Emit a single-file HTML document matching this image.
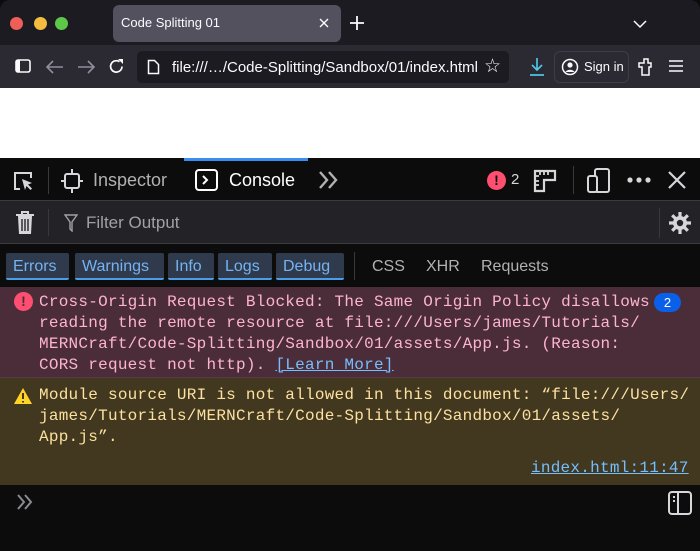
<!DOCTYPE html>
<html><head><meta charset="utf-8"><style>
*{margin:0;padding:0;box-sizing:border-box}
body{width:700px;height:551px;overflow:hidden;background:#0c0c0d;font-family:"Liberation Sans",sans-serif;position:relative}
.a{position:absolute}
.mono{font-family:"Liberation Mono",monospace;font-size:16px;letter-spacing:0.25px;line-height:21px}
.fb{position:absolute;top:253px;height:27px;background:#2f3a4d;color:#75b3f2;font-size:16px;line-height:28px;padding:0 7px;border-bottom:2px solid #4a9de8;border-radius:2px}
</style></head><body>
<div class="a" style="left:0;top:0;width:700px;height:45px;background:#1c1b22;border-radius:10px 10px 0 0"></div>
<div class="a" style="left:10px;top:17px;width:13px;height:13px;border-radius:7px;background:#ed5f57"></div>
<div class="a" style="left:34px;top:17px;width:13px;height:13px;border-radius:7px;background:#f4bd3f"></div>
<div class="a" style="left:55px;top:17px;width:13px;height:13px;border-radius:7px;background:#5dc74a"></div>
<div class="a" style="left:113px;top:5px;width:228px;height:37px;background:#52515d;border-radius:6px"></div>
<div class="a" style="left:121px;top:15px;color:#fbfbfe;font-size:13px">Code Splitting 01</div>
<svg class="a" style="left:319px;top:18px" width="10" height="10"><path d="M1 1l8 8M9 1L1 9" stroke="#fbfbfe" stroke-width="1.4"/></svg>
<svg class="a" style="left:350px;top:16px" width="14" height="14"><path d="M7 0v14M0 7h14" stroke="#fbfbfe" stroke-width="1.8"/></svg>
<svg class="a" style="left:633px;top:19px" width="14" height="10"><path d="M1 2l6 6 6-6" stroke="#fbfbfe" stroke-width="1.5" fill="none"/></svg>
<div class="a" style="left:0;top:45px;width:700px;height:43px;background:#2b2a33"></div>
<svg class="a" style="left:15px;top:59px" width="16" height="14"><rect x="1" y="1" width="14" height="12" rx="2" stroke="#fbfbfe" stroke-width="1.6" fill="none"/><rect x="1" y="1" width="4" height="12" fill="#fbfbfe"/></svg>
<svg class="a" style="left:46px;top:60px" width="18" height="14"><path d="M17 7H2M7 1L1 7l6 6" stroke="#8f8f9d" stroke-width="1.6" fill="none"/></svg>
<svg class="a" style="left:77px;top:60px" width="18" height="14"><path d="M1 7h15M11 1l6 6-6 6" stroke="#8f8f9d" stroke-width="1.6" fill="none"/></svg>
<svg class="a" style="left:108px;top:58px" width="17" height="17"><path d="M14 8.5A5.7 5.7 0 1 1 11.5 3.7" stroke="#fbfbfe" stroke-width="1.7" fill="none"/><path d="M10 1h5v5z" fill="#fbfbfe"/></svg>
<div class="a" style="left:137px;top:51px;width:372px;height:32px;background:#1c1b22;border-radius:5px"></div>
<svg class="a" style="left:147px;top:59px" width="13" height="16"><path d="M1.5 1.5h6l4 4v9h-10z" stroke="#fbfbfe" stroke-width="1.5" fill="none"/></svg>
<div class="a" style="left:172px;top:59px;color:#fbfbfe;font-size:15px">file:///…/Code-Splitting/Sandbox/01/index.html</div>
<div class="a" style="left:484px;top:55px;color:#fbfbfe;font-size:19px">☆</div>
<svg class="a" style="left:528px;top:57px" width="18" height="20"><path d="M9 1v12M4 8l5 5 5-5M2 18h14" stroke="#4fc3e6" stroke-width="1.7" fill="none"/></svg>
<div class="a" style="left:554px;top:51px;width:75px;height:32px;border:1px solid #3e3d47;border-radius:6px"></div>
<svg class="a" style="left:561px;top:58px" width="18" height="18"><circle cx="9" cy="9" r="7.5" stroke="#fbfbfe" stroke-width="1.5" fill="none"/><circle cx="9" cy="7" r="2.6" fill="#fbfbfe"/><path d="M4.5 14a5 4 0 0 1 9 0" fill="#fbfbfe"/></svg>
<div class="a" style="left:584px;top:59px;color:#fbfbfe;font-size:13px">Sign in</div>
<svg class="a" style="left:637px;top:57px" width="18" height="20"><path d="M5 18V10H2V6h5V2h4v4h3v4h-2v8z" stroke="#fbfbfe" stroke-width="1.5" fill="none"/></svg>
<svg class="a" style="left:668px;top:59px" width="16" height="14"><path d="M1 2h14M1 7h14M1 12h14" stroke="#fbfbfe" stroke-width="1.6"/></svg>
<div class="a" style="left:0;top:88px;width:700px;height:70px;background:#fff"></div>
<div class="a" style="left:0;top:158px;width:700px;height:43px;background:#0c0c0d;border-bottom:1px solid #3a3a3f"></div>
<div class="a" style="left:184px;top:158px;width:124px;height:3px;background:#3a8eed"></div>
<svg class="a" style="left:12px;top:170px" width="24" height="22"><path d="M8 19H3V3h16v5" stroke="#d7d7db" stroke-width="2" fill="none"/><path d="M10 9l10 4-4 1.5 4 4-1.5 1.5-4-4L13 20z" fill="#d7d7db"/></svg>
<div class="a" style="left:48px;top:167px;width:1px;height:27px;background:#38383d"></div>
<svg class="a" style="left:61px;top:169px" width="22" height="24"><rect x="4" y="5" width="14" height="14" rx="2" stroke="#d7d7db" stroke-width="2" fill="none"/><path d="M11 0v5M11 19v5M0 12h4M18 12h4" stroke="#d7d7db" stroke-width="2"/></svg>
<div class="a" style="left:93px;top:170px;color:#b1b1b3;font-size:18px">Inspector</div>
<svg class="a" style="left:195px;top:169px" width="24" height="22"><rect x="1" y="1" width="21" height="20" rx="3" stroke="#fff" stroke-width="2" fill="none"/><path d="M8 7l4 4-4 4" stroke="#fff" stroke-width="2" fill="none"/></svg>
<div class="a" style="left:229px;top:170px;color:#fff;font-size:18px">Console</div>
<svg class="a" style="left:318px;top:170px" width="22" height="20"><path d="M2 2l7 8-7 8M11 2l7 8-7 8" stroke="#b1b1b3" stroke-width="2.4" fill="none"/></svg>
<div class="a" style="left:487px;top:171px;width:19px;height:19px;border-radius:10px;background:#ff4f70;color:#0c0c0d;font-size:14px;font-weight:bold;text-align:center;line-height:19px">!</div>
<div class="a" style="left:511px;top:171px;color:#d7d7db;font-size:15px">2</div>
<svg class="a" style="left:533px;top:169px" width="24" height="24"><path d="M2 2h20v9H11v11H2z" stroke="#d7d7db" stroke-width="2.2" fill="none"/><path d="M7 2v4M11 2v4M15 2v4M2 7h4M2 12h4M2 16h4" stroke="#d7d7db" stroke-width="1.8"/></svg>
<div class="a" style="left:573px;top:166px;width:1px;height:28px;background:#38383d"></div>
<svg class="a" style="left:587px;top:168px" width="24" height="26"><rect x="8" y="1" width="14" height="23" rx="2" stroke="#d7d7db" stroke-width="2" fill="none"/><rect x="1" y="8" width="9" height="16" rx="2" stroke="#d7d7db" stroke-width="2" fill="#0c0c0d"/></svg>
<svg class="a" style="left:627px;top:177px" width="24" height="6"><circle cx="3" cy="3" r="2.6" fill="#d7d7db"/><circle cx="12" cy="3" r="2.6" fill="#d7d7db"/><circle cx="21" cy="3" r="2.6" fill="#d7d7db"/></svg>
<svg class="a" style="left:668px;top:171px" width="18" height="18"><path d="M1 1l16 16M17 1L1 17" stroke="#d7d7db" stroke-width="2.2"/></svg>
<div class="a" style="left:0;top:201px;width:700px;height:43px;background:#232327;border-bottom:1px solid #3a3a3f"></div>
<svg class="a" style="left:14px;top:210px" width="22" height="26"><path d="M2 5h18M8 5V2h6v3" stroke="#d7d7db" stroke-width="2" fill="none"/><path d="M4 6h14l-1 18H5z" fill="#d7d7db"/><path d="M8 9v12M11 9v12M14 9v12" stroke="#232327" stroke-width="1.4"/></svg>
<div class="a" style="left:48px;top:209px;width:1px;height:27px;background:#38383d"></div>
<svg class="a" style="left:64px;top:214px" width="14" height="18"><path d="M1 1h12L8 8v9L6 15V8z" stroke="#a0a0a5" stroke-width="1.4" fill="none"/></svg>
<div class="a" style="left:86px;top:213px;color:#a0a0a5;font-size:17px">Filter Output</div>
<div class="a" style="left:659px;top:208px;width:1px;height:30px;background:#38383d"></div>
<svg class="a" style="left:668px;top:211px" width="24" height="24"><g stroke="#d7d7db" stroke-width="3.2"><path d="M12 1v22M1 12h22M4.2 4.2l15.6 15.6M19.8 4.2L4.2 19.8"/></g><circle cx="12" cy="12" r="7" fill="#d7d7db"/><circle cx="12" cy="12" r="3.2" fill="#232327"/></svg>
<div class="fb" style="left:6px;width:63px">Errors</div>
<div class="fb" style="left:75px;width:89px">Warnings</div>
<div class="fb" style="left:168px;width:46px">Info</div>
<div class="fb" style="left:218px;width:54px">Logs</div>
<div class="fb" style="left:276px;width:68px">Debug</div>
<div class="a" style="left:354px;top:252px;width:1px;height:28px;background:#38383d"></div>
<div class="a" style="left:372px;top:258px;color:#b1b1b3;font-size:16px">CSS</div>
<div class="a" style="left:426px;top:258px;color:#b1b1b3;font-size:16px">XHR</div>
<div class="a" style="left:481px;top:258px;color:#b1b1b3;font-size:16px">Requests</div>
<div class="a" style="left:0;top:287px;width:700px;height:91px;background:#4a2d38;border-bottom:1px solid #5a3a44"></div>
<div class="a" style="left:14px;top:292px;width:19px;height:19px;border-radius:10px;background:#ff4f70;color:#4a2d38;font-size:14px;font-weight:bold;text-align:center;line-height:19px">!</div>
<div class="a mono" style="left:39px;top:292px;color:#ffb3d2">Cross-Origin Request Blocked: The Same Origin Policy disallows<br>reading the remote resource at file:///Users/james/Tutorials/<br>MERNCraft/Code-Splitting/Sandbox/01/assets/App.js. (Reason:<br>CORS request not http). <span style="color:#75bfff;text-decoration:underline">[Learn More]</span></div>
<div class="a" style="left:654px;top:293px;width:27px;height:19px;border-radius:10px;background:#0a60e8;color:#fff;font-size:13px;text-align:center;line-height:19px">2</div>
<div class="a" style="left:0;top:378px;width:700px;height:107px;background:#42381f"></div>
<svg class="a" style="left:13px;top:387px" width="20" height="18"><path d="M10 1L19 17H1z" fill="#ffd426"/><path d="M10 6v6M10 14v1.5" stroke="#42381f" stroke-width="2"/></svg>
<div class="a mono" style="left:39px;top:385px;color:#fce19f">Module source URI is not allowed in this document: “file:///Users/<br>james/Tutorials/MERNCraft/Code-Splitting/Sandbox/01/assets/<br>App.js”.</div>
<div class="a mono" style="left:531px;top:458px;color:#75bfff;text-decoration:underline">index.html:11:47</div>
<div class="a" style="left:0;top:485px;width:700px;height:66px;background:#0c0c0d"></div>
<svg class="a" style="left:16px;top:493px" width="20" height="18"><path d="M2 2l6 7-6 7M9 2l6 7-6 7" stroke="#8a8a8f" stroke-width="2" fill="none"/></svg>
<svg class="a" style="left:668px;top:491px" width="24" height="24"><rect x="1" y="1" width="22" height="22" rx="3" stroke="#d7d7db" stroke-width="2" fill="none"/><path d="M10 1v22" stroke="#d7d7db" stroke-width="2"/><path d="M5 6h2M5 10h2" stroke="#d7d7db" stroke-width="2"/></svg>
</body></html>
